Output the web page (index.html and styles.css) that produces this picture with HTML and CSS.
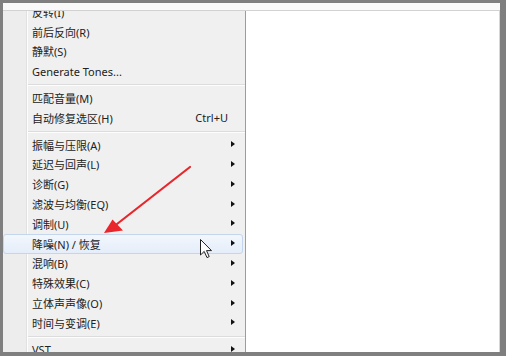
FILE: index.html
```html
<!DOCTYPE html>
<html lang="zh-CN">
<head>
    <meta charset="UTF-8">
    <title>效果菜单</title>
    <link rel="stylesheet" href="styles.css">
</head>
<body>
    <div class="frame">
        <div class="topbar"></div>
        <div class="main">
            <div class="menu">
                <div class="list">
                    <div class="item"><span class="label">反转(I)</span></div>
                    <div class="item"><span class="label">前后反向(R)</span></div>
                    <div class="item"><span class="label">静默(S)</span></div>
                    <div class="item"><span class="label">Generate Tones...</span></div>
                    <div class="sep"></div>
                    <div class="item"><span class="label">匹配音量(M)</span></div>
                    <div class="item"><span class="label">自动修复选区(H)</span><span class="key">Ctrl+U</span></div>
                    <div class="sep"></div>
                    <div class="item"><span class="label">振幅与压限(A)</span><span class="sub"></span></div>
                    <div class="item"><span class="label">延迟与回声(L)</span><span class="sub"></span></div>
                    <div class="item"><span class="label">诊断(G)</span><span class="sub"></span></div>
                    <div class="item"><span class="label">滤波与均衡(EQ)</span><span class="sub"></span></div>
                    <div class="item"><span class="label">调制(U)</span><span class="sub"></span></div>
                    <div class="item active"><span class="label">降噪(N) / 恢复</span><span class="sub"></span></div>
                    <div class="item"><span class="label">混响(B)</span><span class="sub"></span></div>
                    <div class="item"><span class="label">特殊效果(C)</span><span class="sub"></span></div>
                    <div class="item"><span class="label">立体声声像(O)</span><span class="sub"></span></div>
                    <div class="item"><span class="label">时间与变调(E)</span><span class="sub"></span></div>
                    <div class="sep"></div>
                    <div class="item"><span class="label">VST</span><span class="sub"></span></div>
                </div>
            </div>
            <div class="canvas"></div>
        </div>
    </div>

    <svg class="pointer" width="13" height="20" viewBox="0 0 13 20">
        <path d="M0.5 0.5 L0.5 16 L4.2 12.4 L7 18.6 L9.2 17.6 L6.5 11.6 L11.5 11.6 Z" fill="#fff" stroke="#222" stroke-width="1" stroke-linejoin="round"/>
    </svg>

    <svg class="callout" width="506" height="356" viewBox="0 0 506 356">
        <line x1="190" y1="167" x2="117" y2="224" stroke="#e8262b" stroke-width="2.2" stroke-linecap="round"/>
        <polygon points="104,233 112.5,219.5 123,230.5" fill="#e8262b"/>
    </svg>
</body>
</html>
```

FILE: styles.css
```css
* {
    margin: 0;
    padding: 0;
    box-sizing: border-box;
}
body {
    width: 506px;
    height: 356px;
    overflow: hidden;
    background: #7f7f7f;
    font-family: "Noto Sans", "Noto Sans CJK SC", sans-serif;
    font-size: 11px;
    color: #222;
}
.frame {
    height: 356px;
    padding: 3px 6px 4px 3px;
    display: flex;
    flex-direction: column;
}
.topbar {
    height: 8px;
    background: #f9f9f9;
    border-bottom: 1px solid #d2d2d2;
}
.main {
    flex: 1;
    display: flex;
    min-height: 0;
}
.menu {
    width: 243px;
    overflow: hidden;
    border-right: 1px solid #9c9c9c;
    background: linear-gradient(to right, #ededed 23px, #e0e1e1 23px, #e0e1e1 24px, #fdfdfd 24px, #fdfdfd 25px, #f0f0f0 25px);
}
.list {
    margin-top: -9px;
}
.item {
    height: 19.8px;
    display: flex;
    align-items: center;
    padding-left: 28px;
    border: 1px solid transparent;
    margin-right: 2px;
}
.item .label {
    flex: 1;
    white-space: nowrap;
}
.item .key {
    padding-right: 14px;
}
.item .sub {
    width: 15px;
    height: 7px;
    position: relative;
}
.item .sub::after {
    content: "";
    position: absolute;
    left: 4px;
    top: 0;
    border-left: 4px solid #111;
    border-top: 3.5px solid transparent;
    border-bottom: 3.5px solid transparent;
}
.item.active {
    background: linear-gradient(#f3f7fd, #e4edf9);
    border-color: #c3d6ee;
    border-radius: 3px;
}
.sep {
    height: 7px;
    margin-left: 25px;
    padding-top: 3px;
}
.sep::before {
    content: "";
    display: block;
    height: 1px;
    background: #dcdcdc;
    border-bottom: 1px solid #fdfdfd;
    box-sizing: content-box;
}
.canvas {
    flex: 1;
    background: #fff;
    border-right: 1px solid #d6d6d6;
}
.pointer {
    position: absolute;
    left: 200px;
    top: 239px;
}
.callout {
    position: absolute;
    left: 0;
    top: 0;
    pointer-events: none;
}
```
